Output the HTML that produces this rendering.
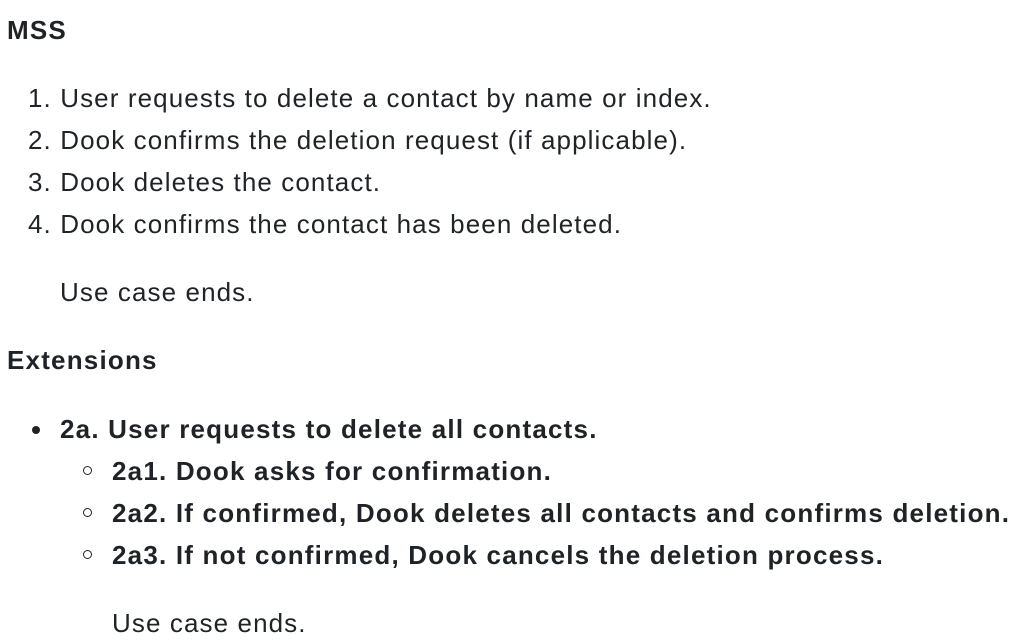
<!DOCTYPE html>
<html><head><meta charset="utf-8"><style>
html,body{margin:0;padding:0;background:#fff;width:1028px;height:644px;overflow:hidden}
body{font-family:"Liberation Sans",sans-serif;color:#1f2328;font-size:26px;position:relative;letter-spacing:1.1px}
.l{position:absolute;white-space:nowrap;line-height:30px;height:30px}
b{font-weight:bold;letter-spacing:1.2px}
.dot{position:absolute;width:8px;height:8px;border-radius:50%;background:#1f2328}
.circ{position:absolute;width:7px;height:7px;border-radius:50%;border:1.5px solid #1f2328}
</style></head><body>
<div class="l" style="left:7px;top:15px"><b>MSS</b></div>
<div class="l" style="left:28px;top:83px">1. User requests to delete a contact by name or index.</div>
<div class="l" style="left:28px;top:125px">2. Dook confirms the deletion request (if applicable).</div>
<div class="l" style="left:28px;top:167px">3. Dook deletes the contact.</div>
<div class="l" style="left:28px;top:209px">4. Dook confirms the contact has been deleted.</div>
<div class="l" style="left:60px;top:277px">Use case ends.</div>
<div class="l" style="left:7px;top:345px"><b>Extensions</b></div>
<div class="dot" style="left:32px;top:426px"></div>
<div class="l" style="left:60px;top:414px"><b>2a. User requests to delete all contacts.</b></div>
<div class="circ" style="left:83px;top:466px"></div>
<div class="l" style="left:112px;top:456px"><b>2a1. Dook asks for confirmation.</b></div>
<div class="circ" style="left:83px;top:508px"></div>
<div class="l" style="left:112px;top:498px"><b>2a2. If confirmed, Dook deletes all contacts and confirms deletion.</b></div>
<div class="circ" style="left:83px;top:550px"></div>
<div class="l" style="left:112px;top:540px"><b>2a3. If not confirmed, Dook cancels the deletion process.</b></div>
<div class="l" style="left:112px;top:608px">Use case ends.</div>
</body></html>
